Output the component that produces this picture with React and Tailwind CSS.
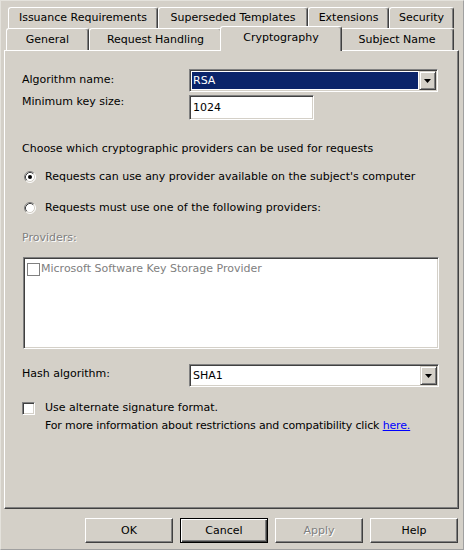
import React from "react";

const sunken =
  "border border-t-[#808080] border-l-[#808080] border-r-white border-b-white shadow-[inset_1px_1px_0_#404040,inset_-1px_-1px_0_#d4d0c8]";

function Tab({ label, className }) {
  return (
    <div
      className={
        "flex items-center justify-center border-t border-l border-r border-t-white border-l-white border-r-[#404040] shadow-[inset_-1px_0_0_#808080] rounded-t-[3px] bg-[#d4d0c8] " +
        className
      }
    >
      {label}
    </div>
  );
}

function DropButton() {
  return (
    <div className="w-[17px] h-full flex items-center justify-center bg-[#d4d0c8] border border-t-[#d4d0c8] border-l-[#d4d0c8] border-r-[#404040] border-b-[#404040] shadow-[inset_1px_1px_0_#fff,inset_-1px_-1px_0_#808080]">
      <svg width="7" height="4" viewBox="0 0 7 4">
        <path d="M0 0h7L3.5 4z" fill="#000" />
      </svg>
    </div>
  );
}

function Combo({ value, selected, className }) {
  return (
    <div className={"flex bg-white p-px " + sunken + " " + className}>
      <div className="flex-1 p-px">
        <div
          className={
            "h-full flex items-center pl-px " +
            (selected ? "bg-[#0a246a] text-white" : "text-black")
          }
        >
          {value}
        </div>
      </div>
      <DropButton />
    </div>
  );
}

function Radio({ checked }) {
  return (
    <svg width="12" height="12" viewBox="0 0 12 12" className="shrink-0">
      <circle cx="6" cy="6" r="5" fill="#fff" />
      <path d="M2.11 9.89A5.5 5.5 0 0 1 9.89 2.11" fill="none" stroke="#808080" />
      <path d="M9.89 2.11A5.5 5.5 0 0 1 2.11 9.89" fill="none" stroke="#fff" />
      <path d="M2.82 9.18A4.5 4.5 0 0 1 9.18 2.82" fill="none" stroke="#404040" />
      <path d="M9.18 2.82A4.5 4.5 0 0 1 2.82 9.18" fill="none" stroke="#d4d0c8" />
      {checked && <circle cx="6" cy="6" r="2" fill="#000" />}
    </svg>
  );
}

function Button({ label, isDefault, disabled }) {
  return (
    <div
      className={
        "w-[88px] h-[25px] flex items-center justify-center bg-[#d4d0c8] border " +
        (isDefault
          ? "border-black shadow-[inset_1px_1px_0_#fff,inset_-1px_-1px_0_#404040,inset_-2px_-2px_0_#808080]"
          : "border-t-white border-l-white border-r-[#404040] border-b-[#404040] shadow-[inset_-1px_-1px_0_#808080]") +
        (disabled ? " text-[#808080] [text-shadow:1px_1px_0_#fff]" : " text-black")
      }
    >
      {label}
    </div>
  );
}

export default function App() {
  return (
    <div className="w-[464px] h-[550px] bg-[#d4d0c8] border border-t-[#e4e2dc] border-l-[#e4e2dc] border-r-[#a0a0a0] border-b-[#a0a0a0] overflow-hidden font-['DejaVu_Sans',sans-serif] text-[11px] leading-[16px] text-black select-none">
      {/* tabs */}
      <div className="pt-[6px]">
        <div className="flex h-[21px] pl-[7px]">
          <Tab label="Issuance Requirements" className="w-[150px] h-full" />
          <Tab label="Superseded Templates" className="w-[150px] h-full" />
          <Tab label="Extensions" className="w-[81px] h-full" />
          <Tab label="Security" className="w-[65px] h-full" />
        </div>
        <div className="flex items-end h-[22px] pl-[5px]">
          <Tab label="General" className="w-[83px] h-full" />
          <Tab label="Request Handling" className="w-[133px] h-full" />
          <Tab
            label="Cryptography"
            className="w-[122px] h-[25px] -mx-[2px] -mb-px relative z-10 pb-[2px]"
          />
          <Tab label="Subject Name" className="w-[114px] h-full" />
        </div>
      </div>

      {/* panel */}
      <div className="ml-[3px] w-[455px] h-[459px] border border-t-white border-l-white border-r-[#404040] border-b-[#404040] shadow-[inset_-1px_-1px_0_#808080] pl-[17px] flex flex-col">
        <div className="mt-[18px] flex items-center h-[23px]">
          <div className="w-[167px] -mt-[2px]">Algorithm name:</div>
          <Combo value="RSA" selected className="w-[249px] h-[23px]" />
        </div>
        <div className="mt-[3px] flex items-start h-[25px]">
          <div className="w-[167px] -mt-[1px]">Minimum key size:</div>
          <div className={"w-[125px] h-[25px] bg-white flex items-center pl-[3px] " + sunken}>
            1024
          </div>
        </div>

        <div className="mt-[21px] h-[16px]">
          Choose which cryptographic providers can be used for requests
        </div>

        <div className="mt-[12px] h-[16px] flex items-center">
          <div className="ml-[2px] mr-[9px] flex">
            <Radio checked />
          </div>
          Requests can use any provider available on the subject's computer
        </div>
        <div className="mt-[15px] h-[16px] flex items-center">
          <div className="ml-[2px] mr-[9px] flex">
            <Radio />
          </div>
          Requests must use one of the following providers:
        </div>

        <div className="mt-[14px] h-[16px] text-[#808080] [text-shadow:1px_1px_0_#fff]">
          Providers:
        </div>

        <div className={"mt-[11px] ml-px w-[416px] h-[92px] bg-white p-[2px] " + sunken}>
          <div className="flex items-center h-[16px] mt-px">
            <div className="ml-px w-[13px] h-[13px] border border-[#808080] bg-white" />
            <span className="ml-px text-[#808080]">Microsoft Software Key Storage Provider</span>
          </div>
        </div>

        <div className="mt-[15px] flex items-center h-[23px]">
          <div className="w-[167px] -mt-[4px]">Hash algorithm:</div>
          <Combo value="SHA1" className="w-[250px] h-[23px]" />
        </div>

        <div className="mt-[14px] flex items-center h-[14px]">
          <div className={"w-[13px] h-[13px] bg-white mr-[10px] " + sunken} />
          Use alternate signature format.
        </div>
        <div className="mt-[3px] h-[16px] pl-[23px] tracking-[-0.15px]">
          For more information about restrictions and compatibility click{" "}
          <span className="text-[#0000ff] underline">here.</span>
        </div>
      </div>

      {/* buttons */}
      <div className="mt-[9px] flex justify-end gap-[7px] pr-[5px]">
        <Button label="OK" />
        <Button label="Cancel" isDefault />
        <Button label="Apply" disabled />
        <Button label="Help" />
      </div>
    </div>
  );
}
